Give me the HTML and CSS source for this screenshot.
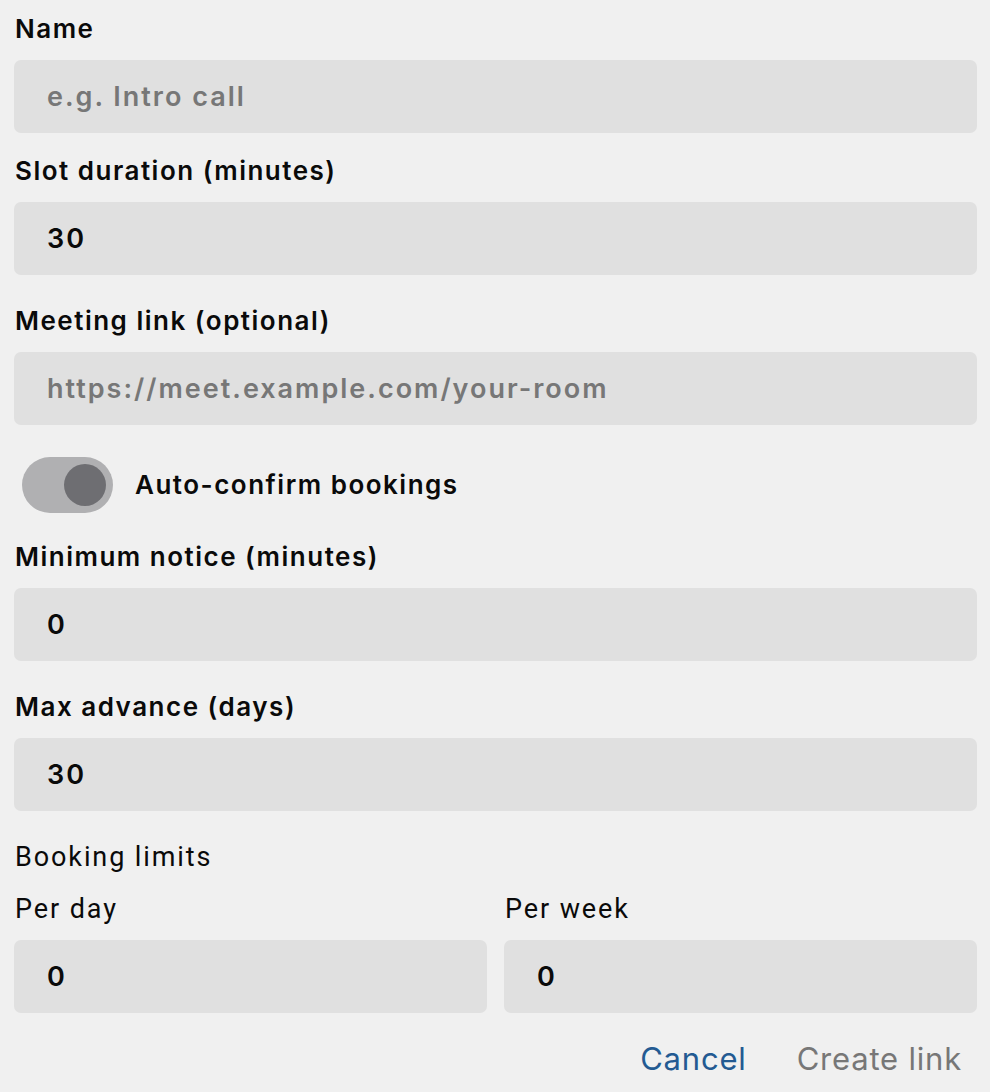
FILE: index.html
```html
<!DOCTYPE html>
<html lang="en">
<head>
<meta charset="utf-8">
<title>Create booking link</title>
<link rel="stylesheet" href="styles.css">
</head>
<body>
<form class="form">
  <div class="field field-first">
    <label class="label" for="name">Name</label>
    <input class="input" id="name" type="text" placeholder="e.g. Intro call">
  </div>
  <div class="field field-tight">
    <label class="label" for="slot">Slot duration (minutes)</label>
    <input class="input" id="slot" type="text" value="30">
  </div>
  <div class="field">
    <label class="label" for="link">Meeting link (optional)</label>
    <input class="input" id="link" type="text" placeholder="https://meet.example.com/your-room">
  </div>
  <div class="toggle-row">
    <span class="toggle"><span class="knob"></span></span>
    <span class="toggle-label">Auto-confirm bookings</span>
  </div>
  <div class="field field-after-toggle">
    <label class="label" for="notice">Minimum notice (minutes)</label>
    <input class="input" id="notice" type="text" value="0">
  </div>
  <div class="field">
    <label class="label" for="advance">Max advance (days)</label>
    <input class="input" id="advance" type="text" value="30">
  </div>
  <div class="limits">
    <div class="limits-title">Booking limits</div>
    <div class="limits-grid">
      <div class="sub-field">
        <label class="sub-label" for="perday">Per day</label>
        <input class="input" id="perday" type="text" value="0">
      </div>
      <div class="sub-field">
        <label class="sub-label" for="perweek">Per week</label>
        <input class="input" id="perweek" type="text" value="0">
      </div>
    </div>
  </div>
  <div class="actions">
    <button type="button" class="btn btn-cancel">Cancel</button>
    <button type="button" class="btn btn-create">Create link</button>
  </div>
</form>
</body>
</html>
```
FILE: styles.css
```css
html, body {
  margin: 0;
  padding: 0;
  background: #f0f0f0;
}
body {
  font-family: Inter, "Noto Sans", sans-serif;
  color: #0a0a0a;
}
.form {
  padding: 13px 13px 0 14px;
  display: flex;
  flex-direction: column;
}
.field {
  display: flex;
  flex-direction: column;
  gap: 15px;
  margin-top: 30px;
}
.field-first { margin-top: 0; }
.field-tight { margin-top: 22px; }
.field-after-toggle { margin-top: 28px; }
.label {
  font-size: 26px;
  line-height: 32px;
  font-weight: 600;
  letter-spacing: 1.5px;
  padding-left: 1px;
}
.input {
  box-sizing: border-box;
  height: 73px;
  width: 100%;
  border: none;
  border-radius: 7px;
  background: #e0e0e0;
  padding: 0 20px 0 33px;
  font-family: Inter, "Noto Sans", sans-serif;
  font-size: 27px;
  font-weight: 600;
  letter-spacing: 2px;
  color: #0a0a0a;
  outline: none;
}
.input::placeholder {
  color: #777777;
  opacity: 1;
}
.toggle-row {
  display: flex;
  align-items: center;
  gap: 22px;
  margin-top: 32px;
  padding-left: 8px;
}
.toggle {
  width: 91px;
  height: 56px;
  border-radius: 28px;
  background: #b0b0b2;
  display: flex;
  align-items: center;
  justify-content: flex-end;
  padding-right: 7px;
  box-sizing: border-box;
}
.knob {
  width: 42px;
  height: 42px;
  border-radius: 50%;
  background: #6e6e72;
}
.toggle-label {
  font-size: 26px;
  line-height: 32px;
  font-weight: 600;
  letter-spacing: 1.5px;
}
.limits {
  margin-top: 30px;
}
.limits-title, .sub-label {
  font-family: Roboto, "Liberation Sans", sans-serif;
  font-size: 27px;
  line-height: 32px;
  font-weight: 400;
  letter-spacing: 1.9px;
  padding-left: 1px;
  display: block;
}
.limits-grid {
  display: grid;
  grid-template-columns: 1fr 1fr;
  gap: 17px;
  margin-top: 20px;
}
.sub-field {
  display: flex;
  flex-direction: column;
  gap: 15px;
}
.actions {
  display: flex;
  justify-content: flex-end;
  gap: 26px;
  margin-top: 26px;
  padding-right: 3px;
}
.btn {
  background: none;
  border: none;
  font-family: Inter, "Noto Sans", sans-serif;
  font-size: 31px;
  font-weight: 400;
  letter-spacing: 0.8px;
  line-height: 40px;
  padding: 0 12px;
}
.btn-cancel { color: #235a92; }
.btn-create { color: #777777; }
```
